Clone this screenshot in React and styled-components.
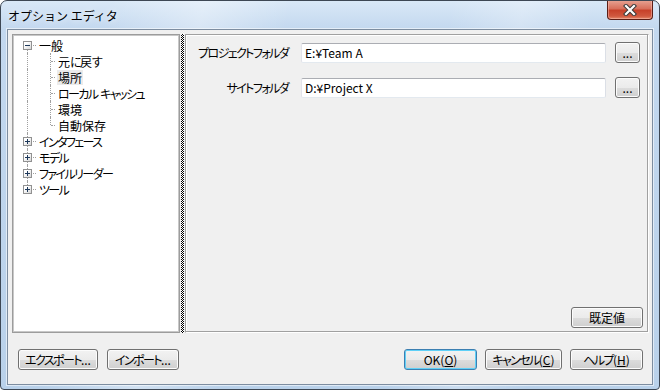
import React from "react";
import styled, { createGlobalStyle } from "styled-components";

const Global = createGlobalStyle`
  html, body {
    margin: 0;
    padding: 0;
    background: #fff;
  }
  body {
    font-family: "Noto Sans CJK JP", "Noto Sans", sans-serif;
    font-size: 12px;
    font-feature-settings: "palt";
    color: #000;
  }
`;

const Window = styled.div`
  box-sizing: border-box;
  width: 660px;
  height: 390px;
  display: flex;
  flex-direction: column;
  border: 1px solid #3d4754;
  border-radius: 7px 7px 4px 4px;
  overflow: hidden;
  background:
    linear-gradient(100deg, rgba(255,255,255,0) 15%, rgba(255,255,255,0.35) 28%, rgba(255,255,255,0) 40%, rgba(255,255,255,0) 62%, rgba(255,255,255,0.25) 72%, rgba(255,255,255,0) 82%),
    linear-gradient(180deg, #d9e8f7 0, #c3d8ef 28px, #b9d1ea 100%);
`;

const TitleBar = styled.div`
  flex: 0 0 28px;
  display: flex;
  justify-content: space-between;
  padding-left: 7px;
  padding-right: 6px;
`;

const Title = styled.div`
  align-self: center;
  font-size: 12px;
  line-height: 14px;
  margin-top: 1px;
  font-feature-settings: normal;
  color: #000;
  text-shadow: 0 0 6px rgba(255, 255, 255, 0.9);
`;

const CloseButton = styled.div`
  align-self: flex-start;
  margin-top: -1px;
  width: 46px;
  height: 20px;
  box-sizing: border-box;
  border: 1px solid #5b1e16;
  border-top: none;
  border-radius: 0 0 4px 4px;
  display: flex;
  align-items: center;
  justify-content: center;
  background: linear-gradient(180deg, #e8a595 0%, #d8705c 45%, #c7412a 55%, #d0583f 85%, #e48a6c 100%);
  box-shadow: inset 0 0 0 1px rgba(255, 200, 190, 0.45);
`;

const Client = styled.div`
  flex: 1;
  display: flex;
  flex-direction: column;
  margin: 0 6px 4px 6px;
  border: 1px solid #7d8da0;
  box-shadow: 0 0 0 1px rgba(255, 255, 255, 0.55);
  background: #f0f0f0;
  padding: 4px 0 0 0;
`;

const Body = styled.div`
  flex: 1;
  display: flex;
  padding: 0 3px 0 4px;
  min-height: 0;
`;

const TreePanel = styled.div`
  flex: 0 0 168px;
  box-sizing: border-box;
  border: 1px solid #9c9c9c;
  box-shadow: inset 0 0 0 1px #c8c8c8;
  background: #fff;
  padding: 2px 0 0 1px;
`;

const TreeRow = styled.div`
  display: flex;
  align-items: center;
  height: 16px;
`;

const Cell = styled.span`
  position: relative;
  flex: 0 0 ${(p) => p.$w}px;
  align-self: stretch;
  &::before {
    content: "";
    display: ${(p) => (p.$v ? "block" : "none")};
    position: absolute;
    left: ${(p) => p.$x}px;
    top: ${(p) => (p.$v === "bottom" ? "8px" : "0")};
    bottom: ${(p) => (p.$v === "top" ? "8px" : "0")};
    border-left: 1px dotted #a0a0a0;
  }
  &::after {
    content: "";
    display: ${(p) => (p.$h ? "block" : "none")};
    position: absolute;
    left: ${(p) => p.$x + 1}px;
    right: 0;
    top: 8px;
    border-top: 1px dotted #a0a0a0;
  }
`;

const Expander = styled.span`
  position: absolute;
  z-index: 1;
  left: ${(p) => p.$x - 4}px;
  top: 4px;
  width: 9px;
  height: 9px;
  box-sizing: border-box;
  border: 1px solid #919191;
  background: linear-gradient(135deg, #ffffff 30%, #d6d6d6 100%);
  display: flex;
  align-items: center;
  justify-content: center;
`;

const TreeLabel = styled.span`
  margin-left: 2px;
  padding: 0 1px;
  height: 15px;
  line-height: 15px;
  white-space: nowrap;
  background: ${(p) => (p.$hover ? "#ebebeb" : "transparent")};
`;

const Kana = styled.span`
  letter-spacing: -1.6px;
`;

const Splitter = styled.div`
  flex: 0 0 5px;
  box-sizing: border-box;
  border-left: 1px solid #f0f0f0;
  border-right: 1px solid #f0f0f0;
  background: repeating-conic-gradient(#000 0 25%, #fff 0 50%) 0 0 / 2px 2px;
`;

const ContentPanel = styled.div`
  flex: 1;
  display: flex;
  flex-direction: column;
  justify-content: space-between;
  border: 1px solid;
  border-color: #a0a0a0 #ffffff #ffffff #a0a0a0;
  box-shadow: inset -1px -1px 0 #a0a0a0, inset 1px 1px 0 #ffffff;
  padding: 7px 8px 4px 0;
`;

const FieldList = styled.div`
  display: flex;
  flex-direction: column;
  gap: 14px;
`;

const FieldRow = styled.div`
  display: flex;
  align-items: center;
  height: 21px;
`;

const FieldLabel = styled.div`
  flex: 0 0 102px;
  text-align: right;
  margin-right: 13px;
  white-space: nowrap;
  line-height: 14px;
`;

const TextBox = styled.div`
  flex: 1;
  box-sizing: border-box;
  height: 20px;
  margin-right: 9px;
  padding: 0 3px;
  line-height: 18px;
  background: #fff;
  border: 1px solid;
  border-color: #abadb3 #dbdfe6 #e3e9ef #e2e3ea;
  border-radius: 2px;
  white-space: nowrap;
`;

const Button = styled.div`
  flex: 0 0 auto;
  box-sizing: border-box;
  width: ${(p) => p.$w}px;
  height: 21px;
  display: flex;
  align-items: center;
  justify-content: center;
  line-height: 14px;
  border: 1px solid ${(p) => (p.$focus ? "#3c7fb1" : "#707070")};
  border-radius: 3px;
  background: linear-gradient(180deg, #f2f2f2 0%, #ebebeb 50%, #dddddd 51%, #cfcfcf 100%);
  box-shadow: inset 0 0 0 1px ${(p) => (p.$focus ? "#5fd0f7" : "#fcfcfc")};
  white-space: nowrap;
  u {
    text-decoration: underline;
    text-underline-offset: 1px;
  }
`;

const PanelFooter = styled.div`
  display: flex;
  justify-content: flex-end;
  margin-right: -3px;
`;

const Footer = styled.div`
  flex: 0 0 51px;
  box-sizing: border-box;
  display: flex;
  justify-content: space-between;
  align-items: flex-start;
  padding: 16px 9px 0 10px;
`;

const ButtonGroup = styled.div`
  display: flex;
  gap: ${(p) => p.$gap}px;
`;

// narrows katakana / hiragana runs the way the proportional UI font does
const JP = ({ children }) =>
  children
    .split(/([\u3040-\u30ff\uff70]+)/)
    .map((part, i) => (/[\u3040-\u30ff\uff70]/.test(part) ? <Kana key={i}>{part}</Kana> : part));

const CloseIcon = () => (
  <svg width="14" height="12" viewBox="0 0 14 12">
    <path d="M3 2 L11 10 M11 2 L3 10" stroke="#3a3a3a" strokeWidth="4.2" strokeLinecap="square" />
    <path d="M3 2 L11 10 M11 2 L3 10" stroke="#ffffff" strokeWidth="2.2" strokeLinecap="square" />
  </svg>
);

const Sign = ({ plus }) => (
  <svg width="7" height="7" viewBox="0 0 7 7">
    <path d="M1 3.5 H6" stroke="#1e395b" strokeWidth="1" />
    {plus && <path d="M3.5 1 V6" stroke="#1e395b" strokeWidth="1" />}
  </svg>
);

const tree = [
  { label: "一般", open: true, children: ["元に戻す", "場所", "ローカル キャッシュ", "環境", "自動保存"] },
  { label: "インタフェース" },
  { label: "モデル" },
  { label: "ファイルリーダー" },
  { label: "ツール" },
];

const rootV = (i) => (i === 0 ? "bottom" : i === tree.length - 1 ? "top" : "full");

export default function App() {
  return (
    <>
      <Global />
      <Window>
        <TitleBar>
          <Title>オプション エディタ</Title>
          <CloseButton>
            <CloseIcon />
          </CloseButton>
        </TitleBar>
        <Client>
          <Body>
            <TreePanel>
              {tree.map((node, i) => (
                <React.Fragment key={node.label}>
                  <TreeRow>
                    <Cell $w={22} $x={13} $v={rootV(i)} $h>
                      <Expander $x={13}>
                        <Sign plus={!node.open} />
                      </Expander>
                    </Cell>
                    <TreeLabel><JP>{node.label}</JP></TreeLabel>
                  </TreeRow>
                  {node.open &&
                    node.children.map((c, j) => (
                      <TreeRow key={c}>
                        <Cell $w={22} $x={13} $v="full" />
                        <Cell $w={19} $x={14} $v={j === node.children.length - 1 ? "top" : "full"} $h />
                        <TreeLabel $hover={c === "場所"}><JP>{c}</JP></TreeLabel>
                      </TreeRow>
                    ))}
                </React.Fragment>
              ))}
            </TreePanel>
            <Splitter />
            <ContentPanel>
              <FieldList>
                <FieldRow>
                  <FieldLabel><JP>プロジェクトフォルダ</JP></FieldLabel>
                  <TextBox>E:¥Team A</TextBox>
                  <Button $w={25}>...</Button>
                </FieldRow>
                <FieldRow>
                  <FieldLabel><JP>サイトフォルダ</JP></FieldLabel>
                  <TextBox>D:¥Project X</TextBox>
                  <Button $w={25}>...</Button>
                </FieldRow>
              </FieldList>
              <PanelFooter>
                <Button $w={72}>既定値</Button>
              </PanelFooter>
            </ContentPanel>
          </Body>
          <Footer>
            <ButtonGroup $gap={9}>
              <Button $w={80}><JP>エクスポート</JP>...</Button>
              <Button $w={72}><JP>インポート</JP>...</Button>
            </ButtonGroup>
            <ButtonGroup $gap={8}>
              <Button $w={73} $focus>
                OK(<u>O</u>)
              </Button>
              <Button $w={77}>
                <JP>キャンセル</JP>(<u>C</u>)
              </Button>
              <Button $w={73}>
                <JP>ヘルプ</JP>(<u>H</u>)
              </Button>
            </ButtonGroup>
          </Footer>
        </Client>
      </Window>
    </>
  );
}
